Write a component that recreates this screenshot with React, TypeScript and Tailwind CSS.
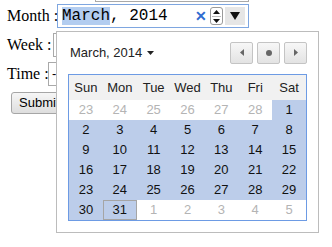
import { useMemo } from 'react';

type Day = { n: number; muted: boolean; sel: boolean; today?: boolean };

function buildDays(): Day[] {
  const days: Day[] = [];
  for (let n = 23; n <= 28; n++) days.push({ n, muted: true, sel: false });
  for (let n = 1; n <= 31; n++) days.push({ n, muted: false, sel: true, today: n === 31 });
  for (let n = 1; n <= 5; n++) days.push({ n, muted: true, sel: false });
  return days;
}

const weekDays = ['Sun', 'Mon', 'Tue', 'Wed', 'Thu', 'Fri', 'Sat'];

export default function App() {
  const days = useMemo(buildDays, []);

  return (
    <div className="relative w-[332px] h-[247px] bg-white overflow-hidden text-[16px] text-black font-['Liberation_Serif',serif]">
      {/* box scrolled off the top */}
      <div className="absolute left-[95px] top-[-20px] w-[154px] h-[22px] border border-[#a9a9a9]" />

      <div className="flex flex-col pt-[4px] pl-[7px]">
        {/* Month */}
        <div className="flex items-center h-[24px]">
          <span className="w-[50px] shrink-0 whitespace-nowrap">Month :</span>
          <div className="flex items-center w-[192px] h-[24px] border border-[#7ea6e0] bg-white pl-[4px] pr-[3px]">
            <span className="font-['Liberation_Mono',monospace] text-[16px] leading-none whitespace-pre">
              <span className="bg-[#b3cdf0]">March</span>, 2014
            </span>
            <span className="ml-auto mr-[1px] text-[#2f6bd0] text-[14px] font-bold leading-none font-['Liberation_Sans',sans-serif]">✕</span>
            <div className="ml-[2px] flex flex-col items-center justify-center w-[13px] h-[18px] border border-[#9a9a9a] rounded-[3px]">
              <svg width="7" height="5" viewBox="0 0 7 5"><path d="M3.5 0 L7 4 L0 4 Z" fill="#111" /></svg>
              <div className="w-[9px] h-px bg-[#bbb] my-[1px]" />
              <svg width="7" height="5" viewBox="0 0 7 5"><path d="M0 1 L7 1 L3.5 5 Z" fill="#111" /></svg>
            </div>
            <div className="ml-[2px] flex items-center justify-center w-[20px] h-[18px] bg-[#e6e6e6]">
              <svg width="10" height="8" viewBox="0 0 10 8"><path d="M0 0 L10 0 L5 8 Z" fill="#111" /></svg>
            </div>
          </div>
        </div>

        {/* Week */}
        <div className="flex items-center h-[24px] mt-[5px]">
          <span className="w-[46px] shrink-0 whitespace-nowrap">Week :</span>
          <div className="w-[180px] h-[24px] border border-[#a9a9a9]" />
        </div>

        {/* Time */}
        <div className="flex items-center h-[24px] mt-[5px]">
          <span className="w-[41px] shrink-0 whitespace-nowrap">Time :</span>
          <div className="w-[12px] h-[24px] border border-[#a9a9a9] border-r-0 pl-[3px] font-['Liberation_Sans',sans-serif] text-[13px] leading-[22px]">
            -
          </div>
        </div>

        {/* Submit */}
        <div className="mt-[4px]">
          <button className="ml-[4px] h-[22px] px-[7px] border border-[#a6a6a6] rounded-[3px] bg-gradient-to-b from-[#f6f6f6] to-[#dedede] text-[13px] font-['Liberation_Sans',sans-serif] text-black">
            Submit
          </button>
        </div>
      </div>

      {/* Month picker popup */}
      <div className="absolute left-[56px] top-[31px] w-[263px] h-[202px] bg-white border border-[#bcbcbc] px-[11px] pt-[9px] font-['Liberation_Sans',sans-serif]">
        <div className="flex items-center h-[23px]">
          <span className="ml-[2px] text-[13px] text-[#222]">March, 2014</span>
          <svg className="ml-[5px]" width="7" height="4" viewBox="0 0 7 4"><path d="M0 0 L7 0 L3.5 4 Z" fill="#222" /></svg>
          <div className="ml-auto flex gap-[4px]">
            <NavButton>
              <svg width="4" height="7" viewBox="0 0 4 7"><path d="M4 0 L4 7 L0 3.5 Z" fill="#666" /></svg>
            </NavButton>
            <NavButton>
              <div className="w-[6px] h-[6px] rounded-full bg-[#666]" />
            </NavButton>
            <NavButton>
              <svg width="4" height="7" viewBox="0 0 4 7"><path d="M0 0 L4 3.5 L0 7 Z" fill="#666" /></svg>
            </NavButton>
          </div>
        </div>

        <div className="mt-[10px] border border-[#6d9be4]">
          <div className="grid grid-cols-7 h-[25px] bg-[#f1f1f1] text-[13px] text-[#222]">
            {weekDays.map((d) => (
              <div key={d} className="flex items-center justify-center">{d}</div>
            ))}
          </div>
          <div className="grid grid-cols-7 text-[13px]">
            {days.map((d, i) => (
              <div
                key={i}
                className={`flex items-center justify-center h-[20px] ${d.sel ? 'bg-[#bccdea] text-[#111]' : 'bg-white text-[#b4b4b4]'} ${d.today ? 'border border-[#a5a5a5]' : ''}`}
              >
                {d.n}
              </div>
            ))}
          </div>
        </div>
      </div>
    </div>
  );
}

function NavButton({ children }: { children: React.ReactNode }) {
  return (
    <div className="flex items-center justify-center w-[23px] h-[22px] border border-[#c4c4c4] rounded-[2px] bg-gradient-to-b from-[#f7f7f7] to-[#e3e3e3]">
      {children}
    </div>
  );
}
